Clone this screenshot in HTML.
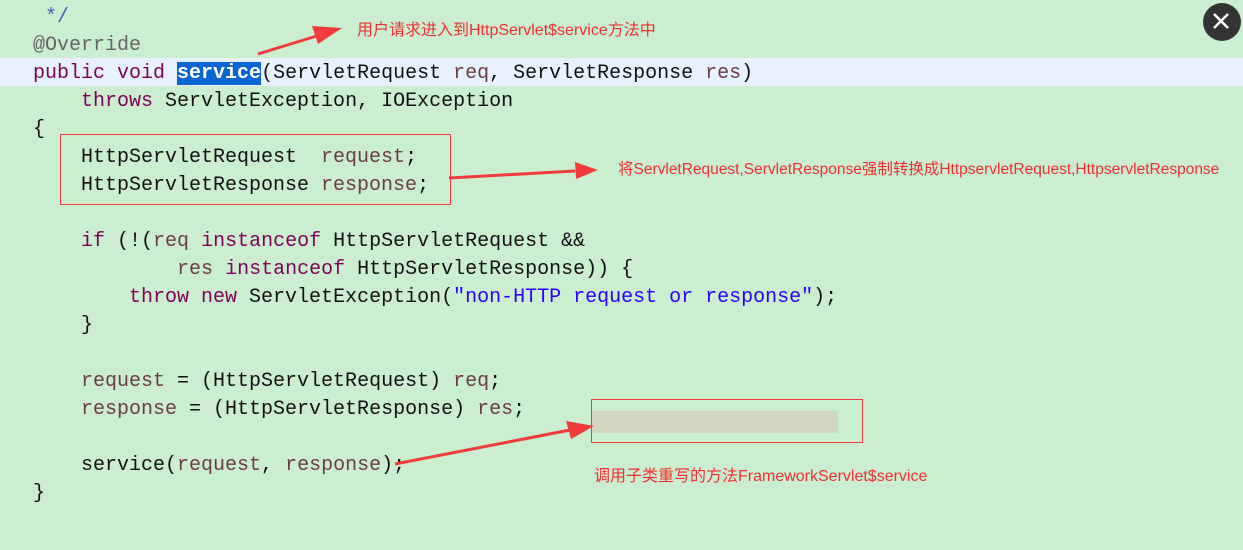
<!DOCTYPE html>
<html><head><meta charset="utf-8"><style>
body{margin:0;width:1243px;height:550px;background:#cbeed1;position:relative;overflow:hidden}
.hl{position:absolute;left:0;top:58px;width:1243px;height:28px;background:#e8f2fe}
pre{position:absolute;left:33px;top:4px;margin:0;font:20px/28px "Liberation Mono","DejaVu Sans Mono",monospace;color:#111}
.k{color:#7f0055}.v{color:#6a3e3e}.c{color:#3f5fbf}.a{color:#646464}.s{color:#2a00ff}
.sel{background:#0a64d2;color:#fff;font-weight:bold}
.t{position:absolute;font:15.5px "Liberation Sans","Noto Sans CJK SC",sans-serif;color:#f03030;white-space:nowrap}
.box{position:absolute;border:1px solid #f03c3c}
.x{position:absolute;left:1203px;top:3px;width:38px;height:38px;border-radius:50%;background:#333}
</style></head><body>
<div class="hl"></div>
<pre><span class="c"> */</span>
<span class="a">@Override</span>
<span class="k">public void</span> <span class="sel">service</span>(ServletRequest <span class="v">req</span>, ServletResponse <span class="v">res</span>)
    <span class="k">throws</span> ServletException, IOException
{
    HttpServletRequest  <span class="v">request</span>;
    HttpServletResponse <span class="v">response</span>;

    <span class="k">if</span> (!(<span class="v">req</span> <span class="k">instanceof</span> HttpServletRequest &amp;&amp;
            <span class="v">res</span> <span class="k">instanceof</span> HttpServletResponse)) {
        <span class="k">throw new</span> ServletException(<span class="s">"non-HTTP request or response"</span>);
    }

    <span class="v">request</span> = (HttpServletRequest) <span class="v">req</span>;
    <span class="v">response</span> = (HttpServletResponse) <span class="v">res</span>;

    service(<span class="v">request</span>, <span class="v">response</span>);
}</pre>
<div class="box" style="left:60px;top:134px;width:389px;height:69px"></div>
<div class="box" style="left:591px;top:399px;width:270px;height:42px"></div>
<div style="position:absolute;left:592px;top:411px;width:246px;height:22px;background:#d6d2bc;opacity:.85"></div>
<div class="t" style="left:357px;top:16px;font-size:16px">用户请求进入到HttpServlet$service方法中</div>
<div class="t" style="left:618px;top:157px">将ServletRequest,ServletResponse强制转换成HttpservletRequest,HttpservletResponse</div>
<div class="t" style="left:594px;top:462px;font-size:16px">调用子类重写的方法FrameworkServlet$service</div>
<svg style="position:absolute;left:0;top:0" width="1243" height="550">
<g fill="#f03c3c" stroke="#f03c3c">
<line x1="258" y1="54" x2="320" y2="35" stroke-width="3"/><polygon points="342,28 312,26 318,44" stroke="none"/>
<line x1="449" y1="178" x2="575" y2="171" stroke-width="3"/><polygon points="598,170 575,162 576,179" stroke="none"/>
<line x1="395" y1="464" x2="570" y2="430" stroke-width="3"/><polygon points="594,426 566,421 571,439" stroke="none"/>
</g>
<g stroke="#fff" stroke-width="2.5"><line x1="1214" y1="14" x2="1228" y2="28"/><line x1="1228" y1="14" x2="1214" y2="28"/></g>
</svg>
<div class="x" style="z-index:-1"></div>
</body></html>
